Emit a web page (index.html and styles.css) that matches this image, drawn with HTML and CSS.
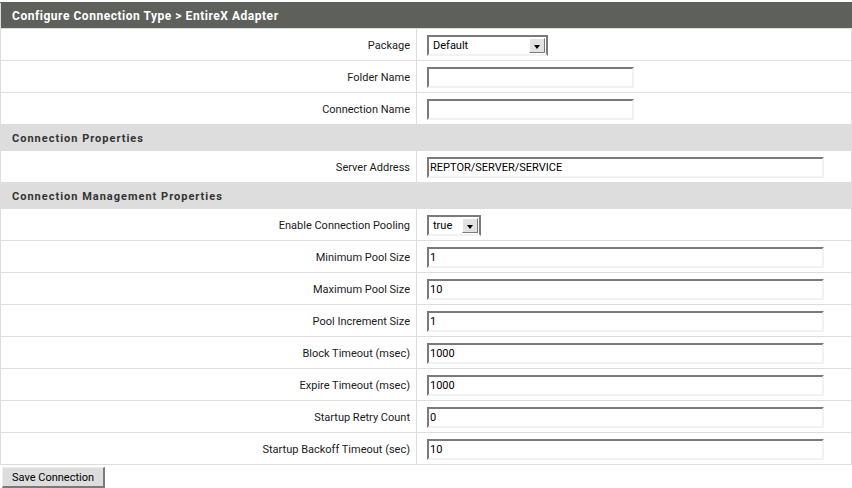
FILE: index.html
```html
<!DOCTYPE html>
<html>
<head>
<meta charset="utf-8">
<link rel="stylesheet" href="styles.css">
</head>
<body>
<table class="form">
  <colgroup><col class="col-label"><col class="col-field"></colgroup>
  <tr><td colspan="2" class="title">Configure Connection Type &gt; EntireX Adapter</td></tr>
  <tr><td class="label">Package</td><td class="field"><span class="select w-pkg"><span class="val">Default</span><span class="arrow"></span></span></td></tr>
  <tr><td class="label">Folder Name</td><td class="field"><span class="input short"></span></td></tr>
  <tr><td class="label">Connection Name</td><td class="field"><span class="input short"></span></td></tr>
  <tr><td colspan="2" class="section">Connection Properties</td></tr>
  <tr><td class="label">Server Address</td><td class="field"><span class="input">REPTOR/SERVER/SERVICE</span></td></tr>
  <tr><td colspan="2" class="section">Connection Management Properties</td></tr>
  <tr><td class="label">Enable Connection Pooling</td><td class="field"><span class="select w-bool"><span class="val">true</span><span class="arrow"></span></span></td></tr>
  <tr><td class="label">Minimum Pool Size</td><td class="field"><span class="input">1</span></td></tr>
  <tr><td class="label">Maximum Pool Size</td><td class="field"><span class="input">10</span></td></tr>
  <tr><td class="label">Pool Increment Size</td><td class="field"><span class="input">1</span></td></tr>
  <tr><td class="label">Block Timeout (msec)</td><td class="field"><span class="input">1000</span></td></tr>
  <tr><td class="label">Expire Timeout (msec)</td><td class="field"><span class="input">1000</span></td></tr>
  <tr><td class="label">Startup Retry Count</td><td class="field"><span class="input">0</span></td></tr>
  <tr><td class="label">Startup Backoff Timeout (sec)</td><td class="field"><span class="input">10</span></td></tr>
</table>
<div class="actions"><span class="button">Save Connection</span></div>
</body>
</html>
```
FILE: styles.css
```css
html, body {
  margin: 0;
  padding: 0;
  background: #ffffff;
}
body {
  font-family: Roboto, "Liberation Sans", sans-serif;
  font-size: 11px;
  color: #000;
}
.form {
  margin-top: 2px;
  width: 852px;
  border-collapse: collapse;
  table-layout: fixed;
}
.col-label { width: 416px; }
.form td {
  border: 1px solid #dddddd;
  padding: 0;
}
.title {
  background: #5e605b;
  color: #ffffff;
  font-weight: bold;
  font-size: 12px;
  letter-spacing: 0.53px;
  height: 25px;
  padding-left: 11px !important;
  border-color: #5e605b #5e605b #dddddd #dddddd !important;
}
.section {
  background: #dddddd;
  color: #333333;
  font-weight: bold;
  font-size: 11px;
  letter-spacing: 1px;
  height: 24px;
  padding-top: 1px !important;
  padding-left: 11px !important;
}
.label {
  height: 30px;
  padding-top: 1px !important;
  text-align: right;
  padding-right: 6px !important;
  color: #1a1a1a;
}
.field {
  padding-top: 1px !important;
  padding-left: 10px !important;
}
.input {
  display: flex;
  align-items: center;
  box-sizing: border-box;
  width: 397px;
  height: 21px;
  border-style: solid;
  border-width: 2px;
  border-color: #7a7a7a #f2f2f2 #f2f2f2 #7a7a7a;
  padding-left: 1px;
  background: #fff;
  font-size: 11px;
}
.input.short {
  width: 207px;
}
.select {
  display: flex;
  align-items: center;
  box-sizing: border-box;
  height: 21px;
  border-style: solid;
  border-width: 2px;
  border-color: #7a7a7a #7a7a7a #f2f2f2 #7a7a7a;
  background: #fff;
}
.w-pkg { width: 121px; }
.w-bool { width: 54px; }
.select .val {
  flex: 1;
  padding-left: 4px;
}
.select .arrow {
  position: relative;
  width: 16px;
  height: 15px;
  margin-right: 1px;
  box-sizing: border-box;
  border: 1px solid #7a7a7a;
  border-top-color: #ffffff;
  border-left-color: #ffffff;
  background: #e2e2e2;
}
.select .arrow::after {
  content: "";
  position: absolute;
  left: 4px;
  top: 6px;
  border-left: 3.5px solid transparent;
  border-right: 3.5px solid transparent;
  border-top: 4px solid #000;
}
.actions {
  padding: 2px 0 0 2px;
}
.button {
  display: inline-flex;
  align-items: center;
  justify-content: center;
  box-sizing: border-box;
  width: 103px;
  height: 21px;
  background: #dddddd;
  border-style: solid;
  border-width: 1px 2px 2px 1px;
  border-color: #eeeeee #7a7a7a #7a7a7a #eeeeee;
  font-size: 11px;
  color: #000;
}
```
